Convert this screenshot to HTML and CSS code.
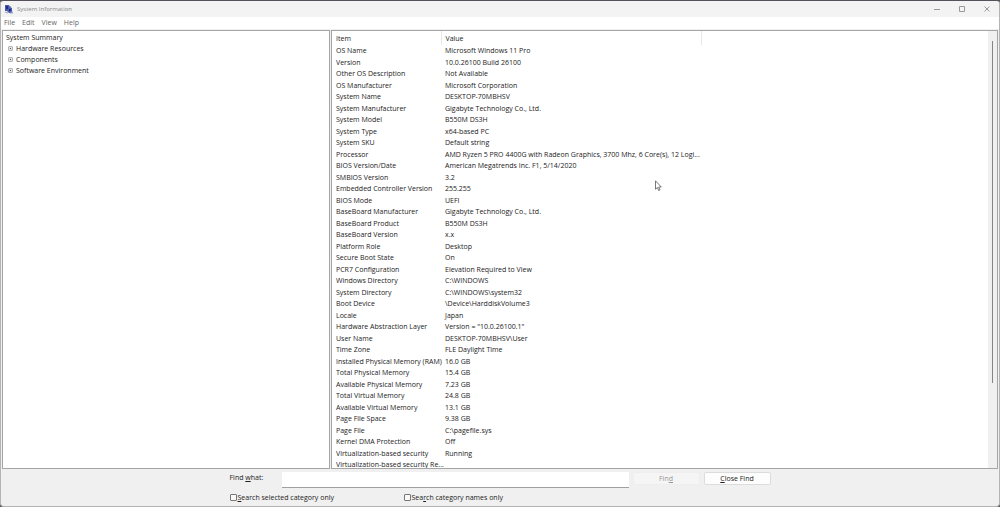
FILE: index.html
```html
<!DOCTYPE html>
<html lang="en">
<head>
    <meta charset="UTF-8">
    <meta name="viewport" content="width=device-width, initial-scale=1.0">
    <title>System Information</title>
    <link rel="stylesheet" href="styles.css">
</head>
<body>
    <div class="window">
        <header class="title-bar">
            <svg class="app-icon" width="8" height="9" viewBox="0 0 8 9">
                <path d="M0 0h4l1 2 2 1v5H4L2 6H0z" fill="#4a5aa8"/>
                <path d="M1 1h2v3H1zM4 4h2v2H4z" fill="#1c2c8c"/>
                <path d="M5 1l1 1M0 7l3 1M6 7h2v1H5" stroke="#9aa5cc" fill="none"/>
            </svg>
            <span class="title">System Information</span>
            <div class="window-buttons">
                <button aria-label="Minimize"><svg width="8" height="8" viewBox="0 0 8 8"><path d="M1 4.5h6"/></svg></button>
                <button aria-label="Maximize"><svg width="8" height="8" viewBox="0 0 8 8"><path d="M1.5 1.5h5v5h-5z"/></svg></button>
                <button aria-label="Close"><svg width="8" height="8" viewBox="0 0 8 8"><path d="M1.5 1.5l5 5M6.5 1.5l-5 5"/></svg></button>
            </div>
        </header>
        <nav class="menu-bar">
            <button>File</button>
            <button>Edit</button>
            <button>View</button>
            <button>Help</button>
        </nav>

        <main class="panes">
            <div class="tree">
                <div class="tree-root">System Summary</div>
                <ul>
                    <li><button class="expand" aria-label="Expand"></button>Hardware Resources</li>
                    <li><button class="expand" aria-label="Expand"></button>Components</li>
                    <li><button class="expand" aria-label="Expand"></button>Software Environment</li>
                </ul>
            </div>
            <div class="details">
                <div class="table-area">
                    <table>
                        <thead>
                            <tr><th class="item">Item</th><th class="value">Value</th><th></th></tr>
                        </thead>
                        <tbody>
                            <tr><td>OS Name</td><td>Microsoft Windows 11 Pro</td></tr>
                            <tr><td>Version</td><td>10.0.26100 Build 26100</td></tr>
                            <tr><td>Other OS Description</td><td>Not Available</td></tr>
                            <tr><td>OS Manufacturer</td><td>Microsoft Corporation</td></tr>
                            <tr><td>System Name</td><td>DESKTOP-70MBHSV</td></tr>
                            <tr><td>System Manufacturer</td><td>Gigabyte Technology Co., Ltd.</td></tr>
                            <tr><td>System Model</td><td>B550M DS3H</td></tr>
                            <tr><td>System Type</td><td>x64-based PC</td></tr>
                            <tr><td>System SKU</td><td>Default string</td></tr>
                            <tr><td>Processor</td><td>AMD Ryzen 5 PRO 4400G with Radeon Graphics, 3700 Mhz, 6 Core(s), 12 Logi...</td></tr>
                            <tr><td>BIOS Version/Date</td><td>American Megatrends Inc. F1, 5/14/2020</td></tr>
                            <tr><td>SMBIOS Version</td><td>3.2</td></tr>
                            <tr><td>Embedded Controller Version</td><td>255.255</td></tr>
                            <tr><td>BIOS Mode</td><td>UEFI</td></tr>
                            <tr><td>BaseBoard Manufacturer</td><td>Gigabyte Technology Co., Ltd.</td></tr>
                            <tr><td>BaseBoard Product</td><td>B550M DS3H</td></tr>
                            <tr><td>BaseBoard Version</td><td>x.x</td></tr>
                            <tr><td>Platform Role</td><td>Desktop</td></tr>
                            <tr><td>Secure Boot State</td><td>On</td></tr>
                            <tr><td>PCR7 Configuration</td><td>Elevation Required to View</td></tr>
                            <tr><td>Windows Directory</td><td>C:\WINDOWS</td></tr>
                            <tr><td>System Directory</td><td>C:\WINDOWS\system32</td></tr>
                            <tr><td>Boot Device</td><td>\Device\HarddiskVolume3</td></tr>
                            <tr><td>Locale</td><td>Japan</td></tr>
                            <tr><td>Hardware Abstraction Layer</td><td>Version = "10.0.26100.1"</td></tr>
                            <tr><td>User Name</td><td>DESKTOP-70MBHSV\User</td></tr>
                            <tr><td>Time Zone</td><td>FLE Daylight Time</td></tr>
                            <tr><td>Installed Physical Memory (RAM)</td><td>16.0 GB</td></tr>
                            <tr><td>Total Physical Memory</td><td>15.4 GB</td></tr>
                            <tr><td>Available Physical Memory</td><td>7.23 GB</td></tr>
                            <tr><td>Total Virtual Memory</td><td>24.8 GB</td></tr>
                            <tr><td>Available Virtual Memory</td><td>13.1 GB</td></tr>
                            <tr><td>Page File Space</td><td>9.38 GB</td></tr>
                            <tr><td>Page File</td><td>C:\pagefile.sys</td></tr>
                            <tr><td>Kernel DMA Protection</td><td>Off</td></tr>
                            <tr><td>Virtualization-based security</td><td>Running</td></tr>
                            <tr><td>Virtualization-based security Re...</td><td></td></tr>
                        </tbody>
                    </table>
                </div>
                <div class="scrollbar"><div class="thumb"></div></div>
            </div>
        </main>

        <form class="find-bar">
            <label class="find-label" for="find">Find <u>w</u>hat:</label>
            <input class="find-input" type="text" id="find">
            <button class="find-button" type="button" disabled>Fin<u>d</u></button>
            <button class="find-button" type="button"><u>C</u>lose Find</button>
            <div class="options">
                <label><input type="checkbox"><span><u>S</u>earch selected category only</span></label>
                <label><input type="checkbox"><span>Sea<u>r</u>ch category names only</span></label>
            </div>
        </form>
    </div>

    <svg class="cursor" width="7" height="12" viewBox="0 0 7 12">
        <path d="M.5.8v8.4l1.9-1.7 1.3 3 1.3-.6-1.3-2.9h2.6z" fill="#fff" stroke="#555" stroke-width=".8"/>
    </svg>
</body>
</html>
```
FILE: styles.css
```css
* {
    box-sizing: border-box;
}

body {
    margin: 0;
    height: 100vh;
    background-color: #55505a;
    font-family: "Open Sans", "Noto Sans", sans-serif;
    font-size: 7px;
    line-height: 11px;
    color: #222;
}

button, input {
    font: inherit;
    color: inherit;
    margin: 0;
    padding: 0;
}

button {
    border: none;
    background: none;
}

.window {
    display: flex;
    flex-direction: column;
    height: 100vh;
    border: 1px solid #b4b4b4;
    border-top-color: #55505a;
    border-radius: 4px;
    background-color: #f0f0f0;
    overflow: hidden;
}

/* title bar and menu */
.title-bar {
    display: flex;
    align-items: center;
    height: 16px;
    padding-left: 4px;
    background-color: #f3f3f3;
    flex-shrink: 0;
}

.title {
    margin-left: 4px;
    font-size: 6px;
    color: #888;
}

.window-buttons {
    display: flex;
    margin-left: auto;
}

.window-buttons button {
    display: flex;
    align-items: center;
    justify-content: center;
    width: 25px;
    height: 16px;
}

.window-buttons path {
    fill: none;
    stroke: #999;
}

.menu-bar {
    display: flex;
    gap: 7px;
    height: 12px;
    padding-left: 3px;
    background-color: #fff;
    color: #666;
    flex-shrink: 0;
}

.menu-bar button {
    height: 11px;
}

/* tree on the left, details on the right */
.panes {
    display: flex;
    gap: 1px;
    flex: 1;
    min-height: 0;
    padding: 1px 1px 0;
}

.tree, .details {
    border: 1px solid #a5a5a5;
    background-color: #fff;
    overflow: hidden;
}

.tree {
    width: 328px;
    flex-shrink: 0;
    padding: 1px 3px;
}

.tree ul {
    list-style: none;
    margin: 0;
    padding: 0 0 0 2px;
}

.tree li {
    display: flex;
    align-items: center;
}

.expand {
    display: flex;
    align-items: center;
    justify-content: center;
    width: 5px;
    height: 5px;
    margin-right: 3px;
    border: 1px solid #b5b5b5;
    border-radius: 1px;
    background-color: #e4e4e4;
}

.expand::before {
    content: "";
    width: 1px;
    height: 1px;
    background-color: #555;
}

.details {
    display: flex;
    flex: 1;
}

.table-area {
    flex: 1;
    overflow: hidden;
}

table {
    width: 100%;
    table-layout: fixed;
    border-collapse: collapse;
}

th, td {
    padding: 0 0 0 4px;
    text-align: left;
    font-weight: normal;
    white-space: nowrap;
}

th {
    height: 14px;
    border-right: 1px solid #e8e8e8;
}

th:last-child {
    border-right: none;
}

.item {
    width: 109px;
}

.value {
    width: 260px;
}

td {
    height: 11px;
}

tr:nth-child(even) td {
    height: 12px;
}

.scrollbar {
    display: flex;
    justify-content: center;
    width: 9px;
    padding: 10px 0 85px;
    background-color: #f0f0f0;
}

.thumb {
    width: 1px;
    background-color: #858585;
}

/* find bar */
.find-bar {
    display: grid;
    grid-template-columns: 48px 347px 67px 67px;
    column-gap: 4px;
    justify-content: center;
    padding: 3px 0 3px;
    flex-shrink: 0;
}

.find-input {
    height: 16px;
    border: none;
    border-bottom: 1px solid #a0a0a0;
    background-color: #fff;
}

.find-button {
    height: 13px;
    border: 1px solid #dcdcdc;
    border-radius: 2px;
    background-color: #fdfdfd;
}

.find-button:disabled {
    border-color: #eee;
    background-color: #f5f5f5;
    color: #999;
}

.options {
    grid-column: 1 / -1;
    display: grid;
    grid-template-columns: 174px 174px;
    padding-top: 4px;
}

.options label {
    display: flex;
    align-items: center;
    gap: 1px;
}

.options input {
    appearance: none;
    width: 7px;
    height: 7px;
    border: 1px solid #777;
    border-radius: 1px;
    background-color: #f8f8f8;
}

/* mouse pointer over the window */
.cursor {
    position: absolute;
    left: 655px;
    top: 180px;
}
```
